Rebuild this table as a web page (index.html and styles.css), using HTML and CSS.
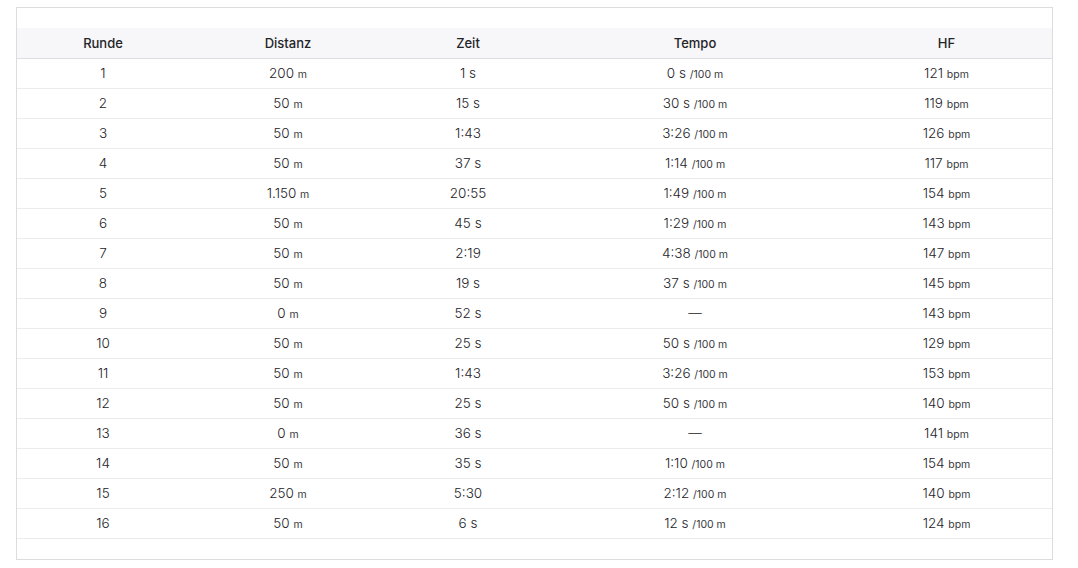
FILE: index.html
```html
<!DOCTYPE html>
<html lang="de">
<head>
<meta charset="utf-8">
<link rel="stylesheet" href="styles.css">
</head>
<body>
<div class="card">
  <table class="laps">
    <colgroup>
      <col class="c1"><col class="c2"><col class="c3"><col class="c4"><col class="c5">
    </colgroup>
    <thead>
      <tr><th>Runde</th><th>Distanz</th><th>Zeit</th><th>Tempo</th><th>HF</th></tr>
    </thead>
    <tbody>
      <tr><td>1</td><td>200 <abbr>m</abbr></td><td>1 s</td><td>0 s <abbr>/100 m</abbr></td><td>121 <abbr>bpm</abbr></td></tr>
      <tr><td>2</td><td>50 <abbr>m</abbr></td><td>15 s</td><td>30 s <abbr>/100 m</abbr></td><td>119 <abbr>bpm</abbr></td></tr>
      <tr><td>3</td><td>50 <abbr>m</abbr></td><td>1:43</td><td>3:26 <abbr>/100 m</abbr></td><td>126 <abbr>bpm</abbr></td></tr>
      <tr><td>4</td><td>50 <abbr>m</abbr></td><td>37 s</td><td>1:14 <abbr>/100 m</abbr></td><td>117 <abbr>bpm</abbr></td></tr>
      <tr><td>5</td><td>1.150 <abbr>m</abbr></td><td>20:55</td><td>1:49 <abbr>/100 m</abbr></td><td>154 <abbr>bpm</abbr></td></tr>
      <tr><td>6</td><td>50 <abbr>m</abbr></td><td>45 s</td><td>1:29 <abbr>/100 m</abbr></td><td>143 <abbr>bpm</abbr></td></tr>
      <tr><td>7</td><td>50 <abbr>m</abbr></td><td>2:19</td><td>4:38 <abbr>/100 m</abbr></td><td>147 <abbr>bpm</abbr></td></tr>
      <tr><td>8</td><td>50 <abbr>m</abbr></td><td>19 s</td><td>37 s <abbr>/100 m</abbr></td><td>145 <abbr>bpm</abbr></td></tr>
      <tr><td>9</td><td>0 <abbr>m</abbr></td><td>52 s</td><td>—</td><td>143 <abbr>bpm</abbr></td></tr>
      <tr><td>10</td><td>50 <abbr>m</abbr></td><td>25 s</td><td>50 s <abbr>/100 m</abbr></td><td>129 <abbr>bpm</abbr></td></tr>
      <tr><td>11</td><td>50 <abbr>m</abbr></td><td>1:43</td><td>3:26 <abbr>/100 m</abbr></td><td>153 <abbr>bpm</abbr></td></tr>
      <tr><td>12</td><td>50 <abbr>m</abbr></td><td>25 s</td><td>50 s <abbr>/100 m</abbr></td><td>140 <abbr>bpm</abbr></td></tr>
      <tr><td>13</td><td>0 <abbr>m</abbr></td><td>36 s</td><td>—</td><td>141 <abbr>bpm</abbr></td></tr>
      <tr><td>14</td><td>50 <abbr>m</abbr></td><td>35 s</td><td>1:10 <abbr>/100 m</abbr></td><td>154 <abbr>bpm</abbr></td></tr>
      <tr><td>15</td><td>250 <abbr>m</abbr></td><td>5:30</td><td>2:12 <abbr>/100 m</abbr></td><td>140 <abbr>bpm</abbr></td></tr>
      <tr><td>16</td><td>50 <abbr>m</abbr></td><td>6 s</td><td>12 s <abbr>/100 m</abbr></td><td>124 <abbr>bpm</abbr></td></tr>
    </tbody>
  </table>
</div>
</body>
</html>
```

FILE: styles.css
```css
html, body {
  margin: 0;
  padding: 0;
  background: #ffffff;
}
body {
  padding: 7px 26px 0 16px;
  font-family: "Inter", "Liberation Sans", sans-serif;
  color: #242428;
}
.card {
  width: 1035px;
  border: 1px solid #dcdcdf;
  padding: 20px 0 20px;
}
.laps {
  width: 100%;
  border-collapse: collapse;
  table-layout: fixed;
}
.c1 { width: 172px; }
.c2 { width: 198px; }
.c3 { width: 162px; }
.c4 { width: 292px; }
.c5 { width: 211px; }
.laps th {
  height: 29px;
  padding: 0 0 1px;
  background: #f7f7f9;
  font-size: 13px;
  font-weight: 500;
  text-align: center;
  border-bottom: 1px solid #dedee2;
}
.laps td {
  height: 27px;
  padding: 0 0 2px;
  font-size: 13.5px;
  font-weight: 300;
  text-align: center;
  border-bottom: 1px solid #ececef;
}
.laps abbr {
  font-size: 10.5px;
  font-weight: 400;
  text-decoration: none;
  color: #3a3a40;
}
```
